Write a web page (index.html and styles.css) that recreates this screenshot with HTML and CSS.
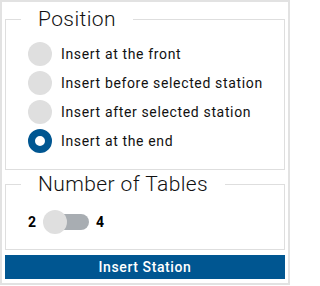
FILE: index.html
```html
<!DOCTYPE html>
<html>
<head>
<meta charset="utf-8">
<link rel="stylesheet" href="styles.css">
</head>
<body>
<div class="panel">
  <fieldset class="group">
    <legend class="group-title">Position</legend>
    <div class="options">
      <label class="option"><span class="radio"></span><span class="option-text">Insert at the front</span></label>
      <label class="option"><span class="radio"></span><span class="option-text">Insert before selected station</span></label>
      <label class="option"><span class="radio"></span><span class="option-text">Insert after selected station</span></label>
      <label class="option"><span class="radio radio-checked"></span><span class="option-text">Insert at the end</span></label>
    </div>
  </fieldset>
  <fieldset class="group group-tables">
    <legend class="group-title">Number of Tables</legend>
    <div class="toggle-row">
      <span class="toggle-value">2</span>
      <span class="switch"><span class="switch-track"></span><span class="switch-knob"></span></span>
      <span class="toggle-value">4</span>
    </div>
  </fieldset>
  <button class="primary-btn">Insert Station</button>
</div>
</body>
</html>
```
FILE: styles.css
```css
html, body {
  margin: 0;
  padding: 0;
  background: #ffffff;
}
body {
  font-family: Roboto, "Noto Sans", "Liberation Sans", sans-serif;
  color: #000000;
}
.panel {
  box-sizing: border-box;
  width: 290px;
  height: 285px;
  border: 2px solid #e2e2e2;
  padding: 3px;
  display: flex;
  flex-direction: column;
}
.group {
  margin: 0;
  min-width: 0;
  border: 1px solid #dedede;
  padding: 0 0 14px 15px;
}
.group-title {
  padding: 0 17px;
  font-size: 21px;
  font-weight: 300;
  line-height: 28px;
  letter-spacing: 0.4px;
  color: #111111;
}
.options {
  display: flex;
  flex-direction: column;
  padding: 6px 0 0 7px;
}
.option {
  display: flex;
  align-items: center;
  height: 29px;
  gap: 9px;
  font-size: 14px;
  letter-spacing: 0.65px;
  color: #111111;
}
.radio {
  box-sizing: border-box;
  width: 24px;
  height: 24px;
  border-radius: 50%;
  background: #dfdfdf;
  flex: none;
}
.radio-checked {
  background: #ffffff;
  border: 7px solid #005691;
}
.group-tables {
  padding-bottom: 15px;
}
.toggle-row {
  display: flex;
  align-items: center;
  gap: 7px;
  height: 24px;
  margin-top: 12px;
  padding-left: 7px;
}
.toggle-value {
  font-size: 14px;
  font-weight: 700;
}
.switch {
  position: relative;
  width: 46px;
  height: 24px;
  display: flex;
  align-items: center;
}
.switch-track {
  margin-left: 2px;
  width: 44px;
  height: 16px;
  border-radius: 8px;
  background: #a8adb2;
}
.switch-knob {
  position: absolute;
  left: 0;
  top: 0;
  width: 24px;
  height: 24px;
  border-radius: 50%;
  background: #dfdfdf;
}
.primary-btn {
  margin-top: 5px;
  height: 24px;
  border: 0;
  padding: 0;
  background: #005691;
  color: #ffffff;
  font-family: Roboto, "Noto Sans", "Liberation Sans", sans-serif;
  font-size: 14px;
  font-weight: 500;
  letter-spacing: 0.6px;
}
```
